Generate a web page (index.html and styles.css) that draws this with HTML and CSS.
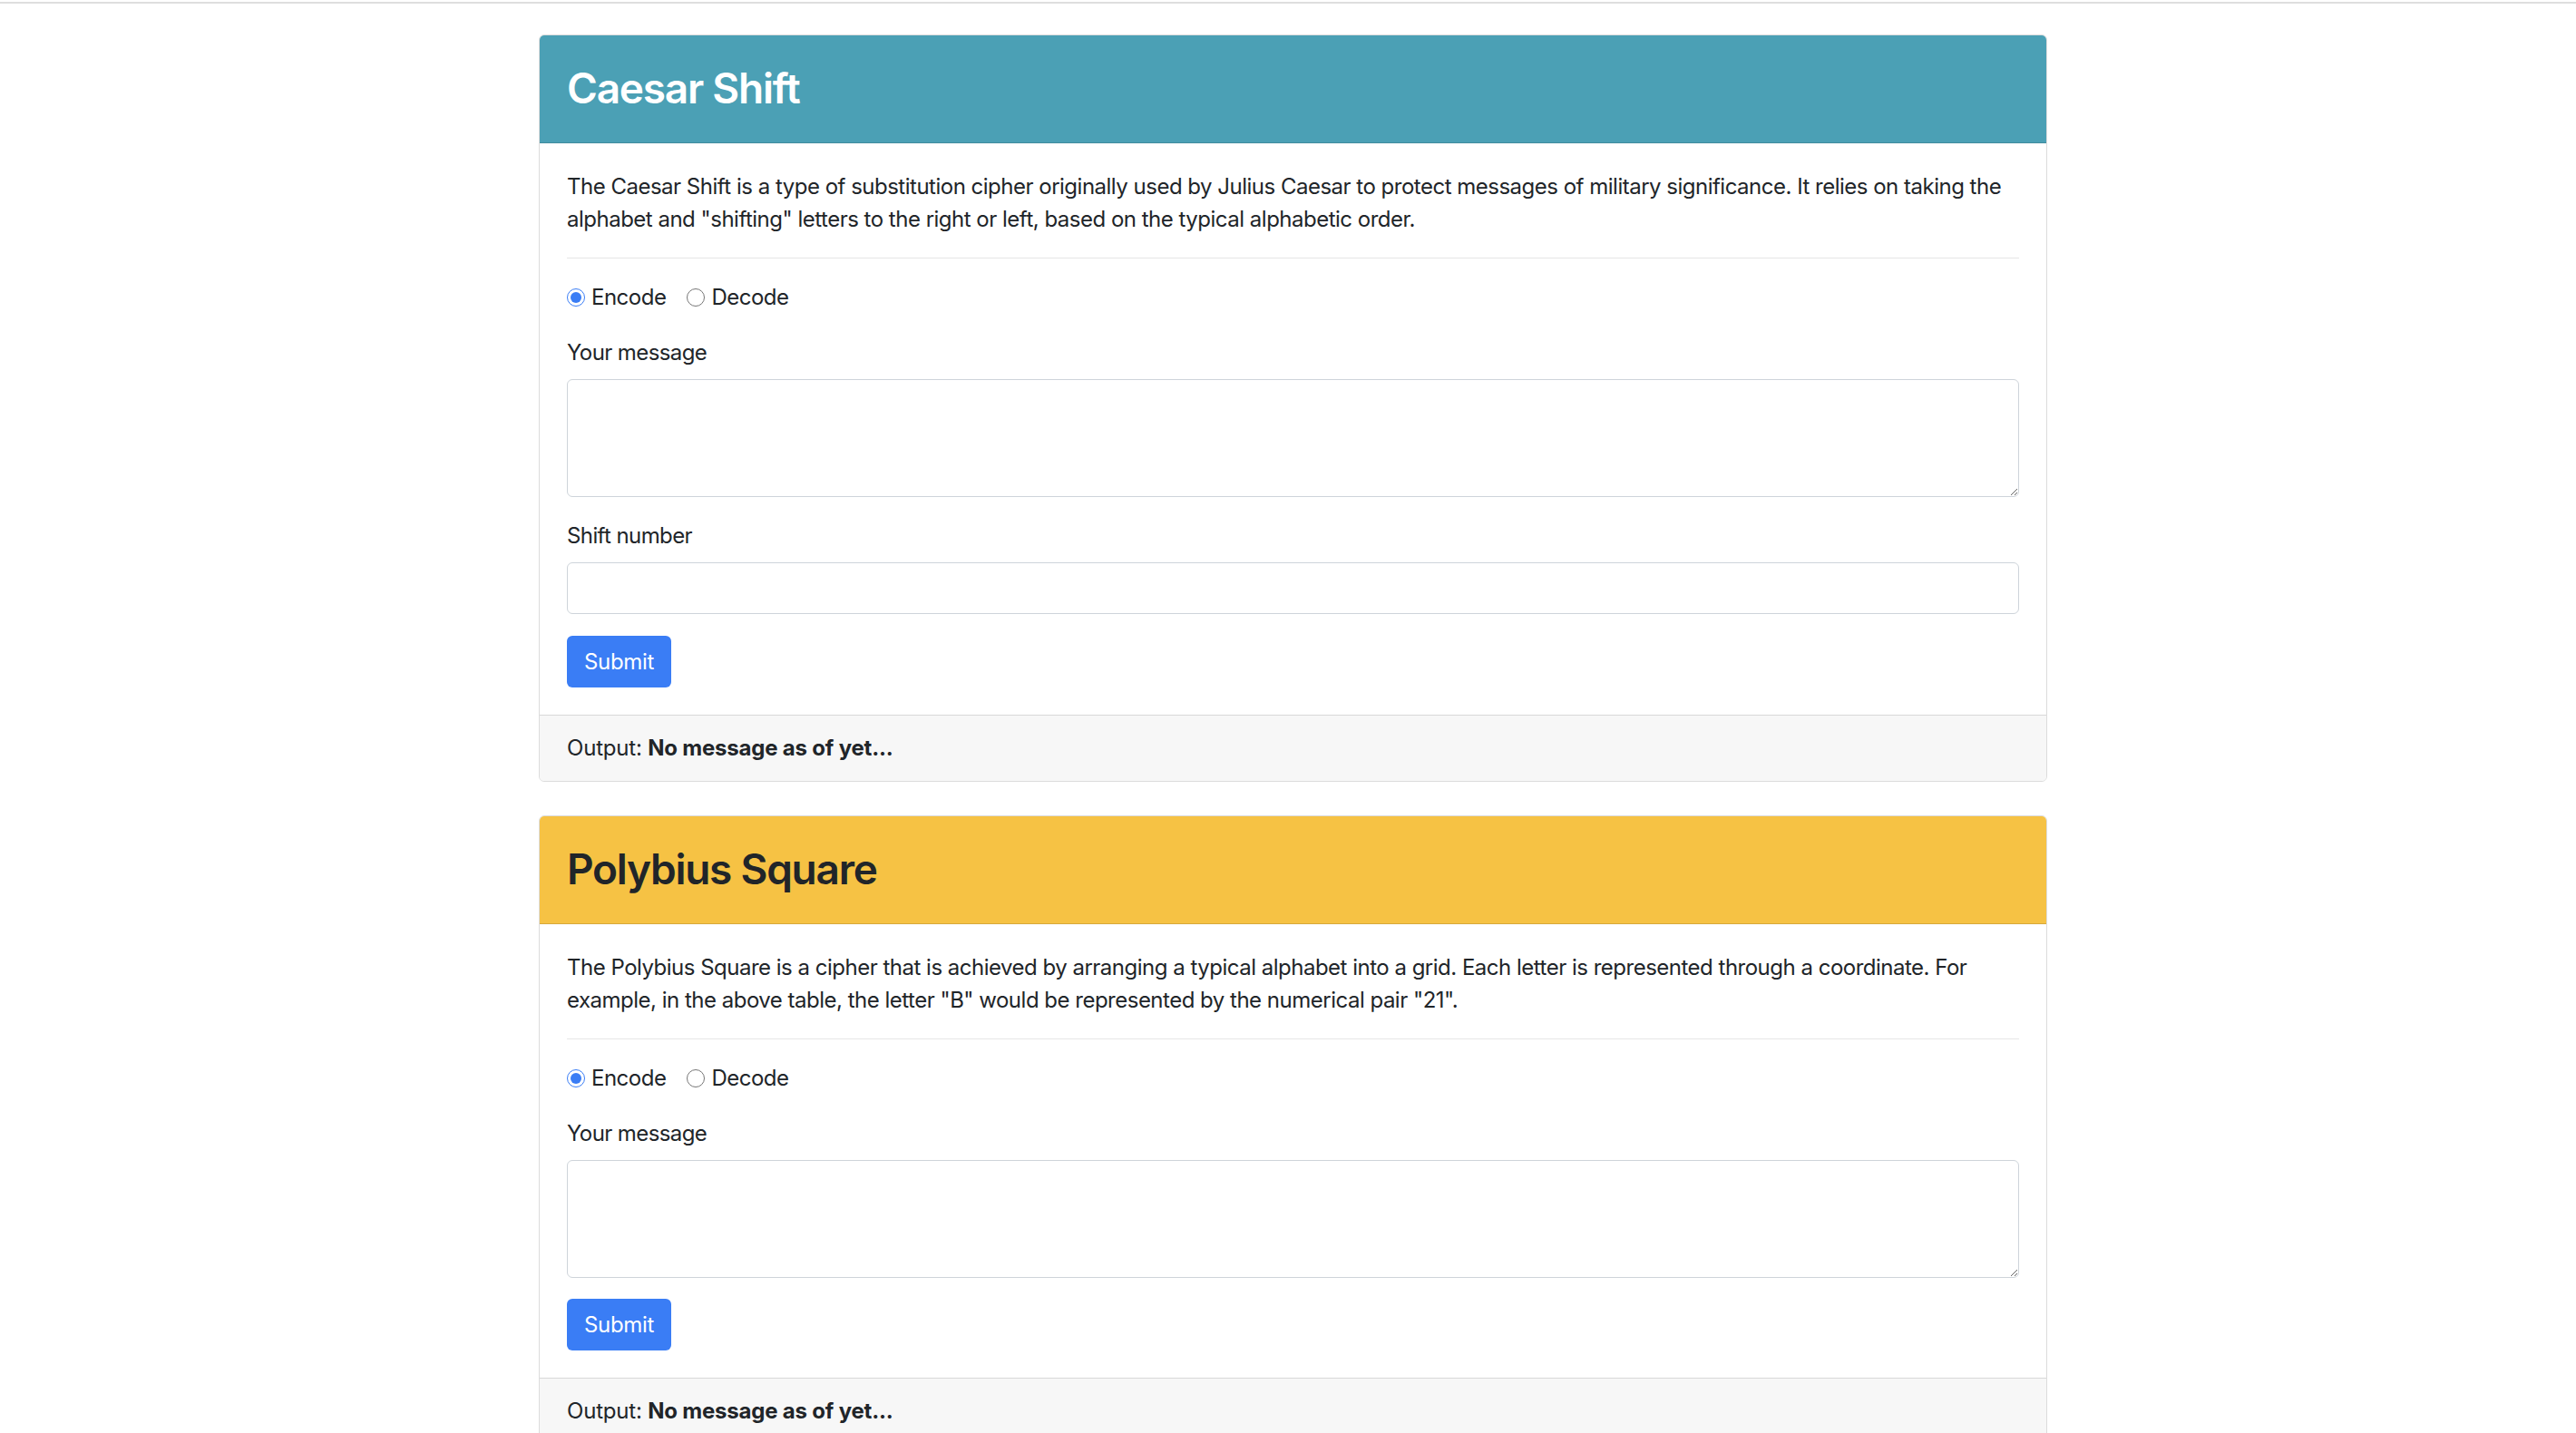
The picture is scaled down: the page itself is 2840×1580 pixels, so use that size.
FILE: index.html
```html
<!DOCTYPE html>
<html lang="en">
<head>
<meta charset="utf-8">
<title>Ciphers</title>
<link rel="stylesheet" href="styles.css">
</head>
<body>
<div class="topbar"></div>
<main class="page">
  <div class="container">
    <section class="card">
      <header class="card-header header-info">
        <h2 class="card-title">Caesar Shift</h2>
      </header>
      <div class="card-body">
        <p class="intro">The Caesar Shift is a type of substitution cipher originally used by Julius Caesar to protect messages of military significance. It relies on taking the alphabet and "shifting" letters to the right or left, based on the typical alphabetic order.</p>
        <hr class="divider">
        <form class="cipher-form">
          <div class="radio-row">
            <label class="radio-item"><input type="radio" name="mode1" checked> Encode</label>
            <label class="radio-item"><input type="radio" name="mode1"> Decode</label>
          </div>
          <div class="form-group">
            <label class="field-label" for="msg1">Your message</label>
            <textarea id="msg1" class="field textarea" rows="3"></textarea>
          </div>
          <div class="form-group form-group-tight">
            <label class="field-label" for="shift1">Shift number</label>
            <input id="shift1" class="field input" type="text">
          </div>
          <button type="button" class="btn">Submit</button>
        </form>
      </div>
      <footer class="card-footer">Output: <strong>No message as of yet...</strong></footer>
    </section>

    <section class="card">
      <header class="card-header header-warning">
        <h2 class="card-title">Polybius Square</h2>
      </header>
      <div class="card-body">
        <p class="intro">The Polybius Square is a cipher that is achieved by arranging a typical alphabet into a grid. Each letter is represented through a coordinate. For example, in the above table, the letter "B" would be represented by the numerical pair "21".</p>
        <hr class="divider">
        <form class="cipher-form">
          <div class="radio-row">
            <label class="radio-item"><input type="radio" name="mode2" checked> Encode</label>
            <label class="radio-item"><input type="radio" name="mode2"> Decode</label>
          </div>
          <div class="form-group form-group-last">
            <label class="field-label" for="msg2">Your message</label>
            <textarea id="msg2" class="field textarea" rows="3"></textarea>
          </div>
          <button type="button" class="btn">Submit</button>
        </form>
      </div>
      <footer class="card-footer">Output: <strong>No message as of yet...</strong></footer>
    </section>
  </div>
</main>
</body>
</html>
```
FILE: styles.css
```css
* { box-sizing: border-box; }

html, body {
  margin: 0;
  padding: 0;
  background: #ffffff;
}

body {
  font-family: Inter, "Noto Sans", "Liberation Sans", sans-serif;
  font-size: 24px;
  line-height: 36px;
  color: #212529;
  letter-spacing: -0.5px;
}

.topbar {
  margin-top: 2px;
  height: 2px;
  background: #dedede;
}

.page {
  padding: 34px 0 0 11px;
}

.container {
  width: 1663px;
  margin: 0 auto;
}

.card {
  border: 1px solid #dcdcdc;
  border-radius: 6px;
  margin-bottom: 37px;
  overflow: hidden;
  background: #fff;
}

.card-header {
  height: 119px;
  padding: 0 30px;
  display: flex;
  align-items: center;
  border-bottom: 1px solid rgba(0, 0, 0, 0.125);
}

.header-info {
  background: #4ba0b5;
  color: #ffffff;
}

.header-warning {
  background: #f6c244;
  color: #212529;
}

.card-title {
  margin: 0;
  font-size: 46px;
  font-weight: 600;
  line-height: 57.6px;
  letter-spacing: -1.25px;
}

.card-body {
  padding: 30px 30px 30px;
}

.intro {
  margin: 0 0 24px;
}

.divider {
  margin: 0 0 25px;
  border: 0;
  border-top: 1px solid #e6e6e6;
  height: 0;
}

.cipher-form {
  margin: 0;
}

.radio-row {
  display: flex;
  gap: 23px;
  height: 36px;
  align-items: center;
  margin-bottom: 25px;
}

.radio-item {
  display: flex;
  align-items: center;
  gap: 7px;
}

.radio-item input {
  width: 20px;
  height: 20px;
  margin: 0;
  accent-color: #3a7df5;
}

.form-group {
  margin-bottom: 25px;
}

.form-group-tight {
  margin-bottom: 24px;
}

.form-group-last {
  margin-bottom: 23px;
}

.field-label {
  display: block;
  margin-bottom: 11px;
  letter-spacing: -0.6px;
}

.field {
  display: block;
  width: 100%;
  border: 1px solid #ced4da;
  border-radius: 6px;
  background: #fff;
  padding: 9px 18px;
  font: inherit;
  color: #495057;
  outline: none;
}

.textarea {
  height: 130px;
  resize: vertical;
}

.input {
  height: 57px;
}

.btn {
  display: block;
  width: 115px;
  height: 57px;
  padding: 0;
  border: 0;
  border-radius: 6px;
  background: #3a7df5;
  color: #ffffff;
  font: inherit;
  letter-spacing: -0.3px;
  cursor: pointer;
}

.card-footer {
  background: #f7f7f7;
  border-top: 1px solid rgba(0, 0, 0, 0.125);
  padding: 18px 30px;
  letter-spacing: -0.2px;
}

.card-footer strong {
  font-weight: 700;
}
```
